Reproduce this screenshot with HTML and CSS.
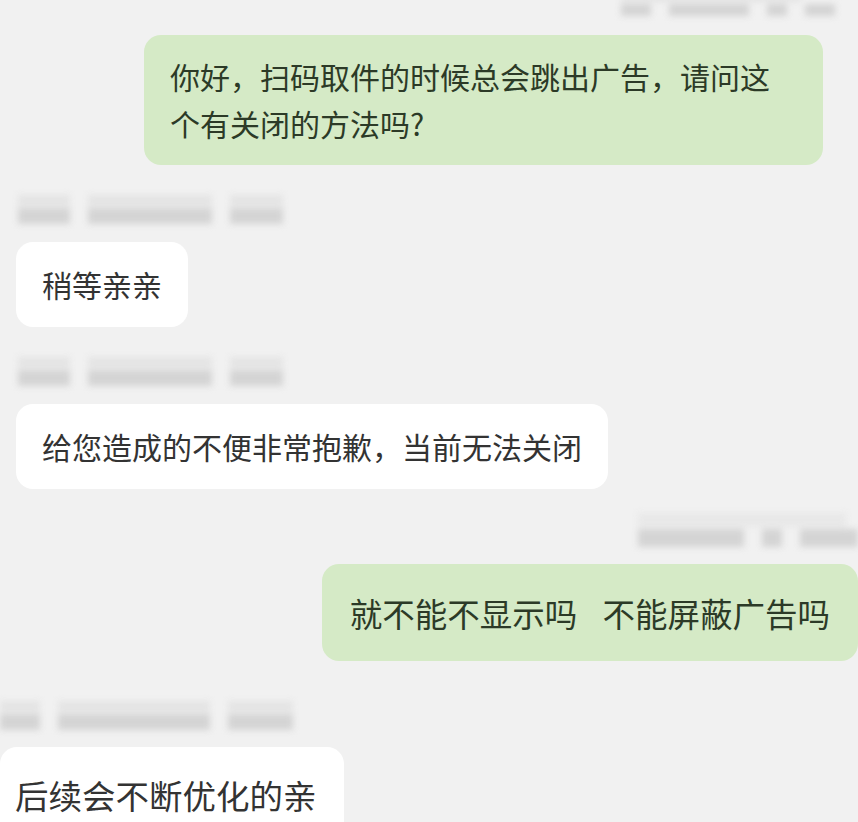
FILE: index.html
```html
<!DOCTYPE html>
<html lang="zh-CN">
<head>
    <meta charset="UTF-8">
    <meta name="viewport" content="width=device-width, initial-scale=1.0">
    <title>聊天记录</title>
    <link rel="stylesheet" href="styles.css">
</head>
<body>
    <div class="chat">
        <!-- me -->
        <div class="meta meta-top-right">
            <div class="meta-line light"><span class="w180"></span></div>
            <div class="meta-line dark"><span class="w30"></span><span class="w80"></span><span class="w20"></span><span class="w30"></span></div>
        </div>
        <div class="bubble mine first">你好，扫码取件的时候总会跳出广告，请问这个有关闭的方法吗?</div>

        <!-- service -->
        <div class="meta meta-left">
            <div class="meta-line light"><span class="w52"></span><span class="w124"></span><span class="w53"></span></div>
            <div class="meta-line dark"><span class="w52"></span><span class="w124"></span><span class="w53"></span></div>
        </div>
        <div class="bubble theirs">稍等亲亲</div>

        <div class="meta meta-left">
            <div class="meta-line light"><span class="w52"></span><span class="w124"></span><span class="w53"></span></div>
            <div class="meta-line dark"><span class="w52"></span><span class="w124"></span><span class="w53"></span></div>
        </div>
        <div class="bubble theirs">给您造成的不便非常抱歉，当前无法关闭</div>

        <!-- me -->
        <div class="meta meta-right">
            <div class="meta-line light"><span class="w208"></span></div>
            <div class="meta-line dark"><span class="w106"></span><span class="w20"></span><span class="w58"></span></div>
        </div>
        <div class="bubble mine big">就不能不显示吗 不能屏蔽广告吗</div>

        <!-- service -->
        <div class="meta meta-left edge">
            <div class="meta-line light"><span class="w40"></span><span class="w152"></span><span class="w65"></span></div>
            <div class="meta-line dark"><span class="w40"></span><span class="w152"></span><span class="w65"></span></div>
        </div>
        <div class="bubble theirs bigger">后续会不断优化的亲</div>
    </div>
</body>
</html>
```

FILE: styles.css
```css
body {
    margin: 0;
    height: 822px;
    overflow: hidden;
    background: #f1f1f1;
    font-family: "Noto Sans CJK SC", "Noto Sans", sans-serif;
}

.chat {
    display: flex;
    flex-direction: column;
}

/* blurred nickname / time rows */
.meta {
    display: flex;
    flex-direction: column;
    gap: 2px;
    filter: blur(3px);
}

.meta-line {
    display: flex;
    gap: 18px;
}

.meta-line span { display: block; }
.meta-line.light span { height: 11px; background: #e4e4e4; }
.meta-line.dark span { height: 16px; background: #d4d4d4; }

.w20 { width: 20px; }
.w30 { width: 30px; }
.w40 { width: 40px; }
.w52 { width: 52px; }
.w53 { width: 53px; }
.w58 { width: 58px; }
.w65 { width: 65px; }
.w80 { width: 80px; }
.w106 { width: 106px; }
.w124 { width: 124px; }
.w152 { width: 152px; }
.w180 { width: 180px; }
.w208 { width: 208px; }

.meta-top-right {
    align-self: flex-end;
    margin-right: 23px;
    margin-top: -6px;
}

.meta-top-right .meta-line.light span { height: 8px; }
.meta-top-right .meta-line.dark span { height: 12px; }

.meta-left {
    align-self: flex-start;
    margin: 30px 0 18px 18px;
}

.meta-left.edge {
    margin: 40px 0 17px 0;
}

.meta-right {
    align-self: flex-end;
    margin: 24px 0 17px 0;
}

.meta-right .meta-line.dark span { height: 18px; }
.meta-right .meta-line.light span { height: 14px; background: #e8e8e8; }

/* bubbles */
.bubble {
    font-size: 30px;
    line-height: 47px;
    padding: 19px 26px;
    border-radius: 17px;
    width: fit-content;
}

.bubble.mine {
    align-self: flex-end;
    background: #d5eac6;
    color: #2c3a27;
}

.bubble.theirs {
    align-self: flex-start;
    margin-left: 16px;
    background: #ffffff;
    color: #333333;
}

.bubble.first {
    margin-top: 19px;
    margin-right: 35px;
    width: 627px;
    padding: 18px 26px;
}

.bubble.big {
    font-size: 32.5px;
    word-spacing: 18px;
    padding: 25px 28px;
    margin-right: 0;
}

.bubble.bigger {
    margin-left: 0;
    font-size: 33.5px;
    padding: 24px 27px 24px 15px;
}
```
